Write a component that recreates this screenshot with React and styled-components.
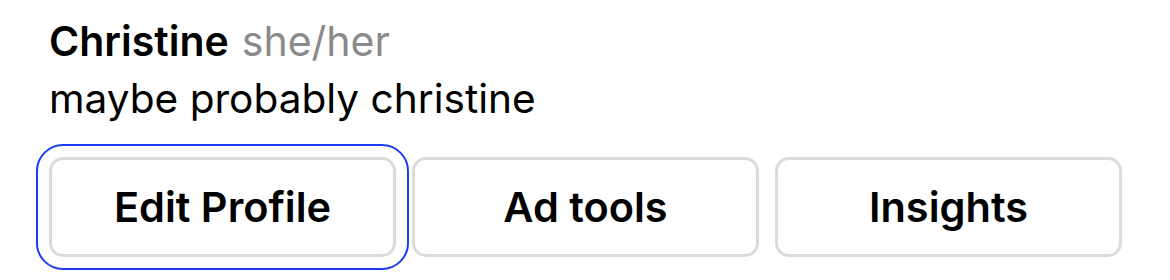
import React from "react";
import styled, { createGlobalStyle } from "styled-components";

const GlobalStyle = createGlobalStyle`
  html, body {
    margin: 0;
    padding: 0;
    background: #fff;
  }
  body {
    font-family: "Inter", "Noto Sans", "Liberation Sans", sans-serif;
    color: #000;
  }
`;

const ProfileHeader = styled.div`
  display: flex;
  flex-direction: column;
  min-height: 280px;
  box-sizing: border-box;
  padding: 13px 48px 0 49px;
`;

const NameLine = styled.div`
  font-size: 41px;
  line-height: 57px;
  white-space: nowrap;
`;

const Name = styled.span`
  font-weight: 600;
`;

const Pronouns = styled.span`
  color: #8a8a8a;
  font-weight: 400;
  margin-left: 13px;
`;

const Bio = styled.div`
  font-size: 40.6px;
  line-height: 57px;
  font-weight: 400;
  white-space: nowrap;
`;

const ButtonRow = styled.div`
  display: grid;
  grid-template-columns: repeat(3, 1fr);
  gap: 16px;
  margin-top: 30px;
`;

const ProfileButton = styled.button`
  height: 100px;
  box-sizing: border-box;
  background: #fff;
  border: 3px solid #dbdbdb;
  border-radius: 14px;
  font-family: inherit;
  font-size: 41.5px;
  font-weight: 600;
  color: #000;
  padding: 0;
  outline: ${(p) => (p.$focused ? "2px solid #1d3cf2" : "none")};
  outline-offset: 11px;
`;

function App() {
  return (
    <>
      <GlobalStyle />
      <ProfileHeader>
        <NameLine>
          <Name>Christine</Name>
          <Pronouns>she/her</Pronouns>
        </NameLine>
        <Bio>maybe probably christine</Bio>
        <ButtonRow>
          <ProfileButton $focused>Edit Profile</ProfileButton>
          <ProfileButton>Ad tools</ProfileButton>
          <ProfileButton>Insights</ProfileButton>
        </ButtonRow>
      </ProfileHeader>
    </>
  );
}

export default App;
